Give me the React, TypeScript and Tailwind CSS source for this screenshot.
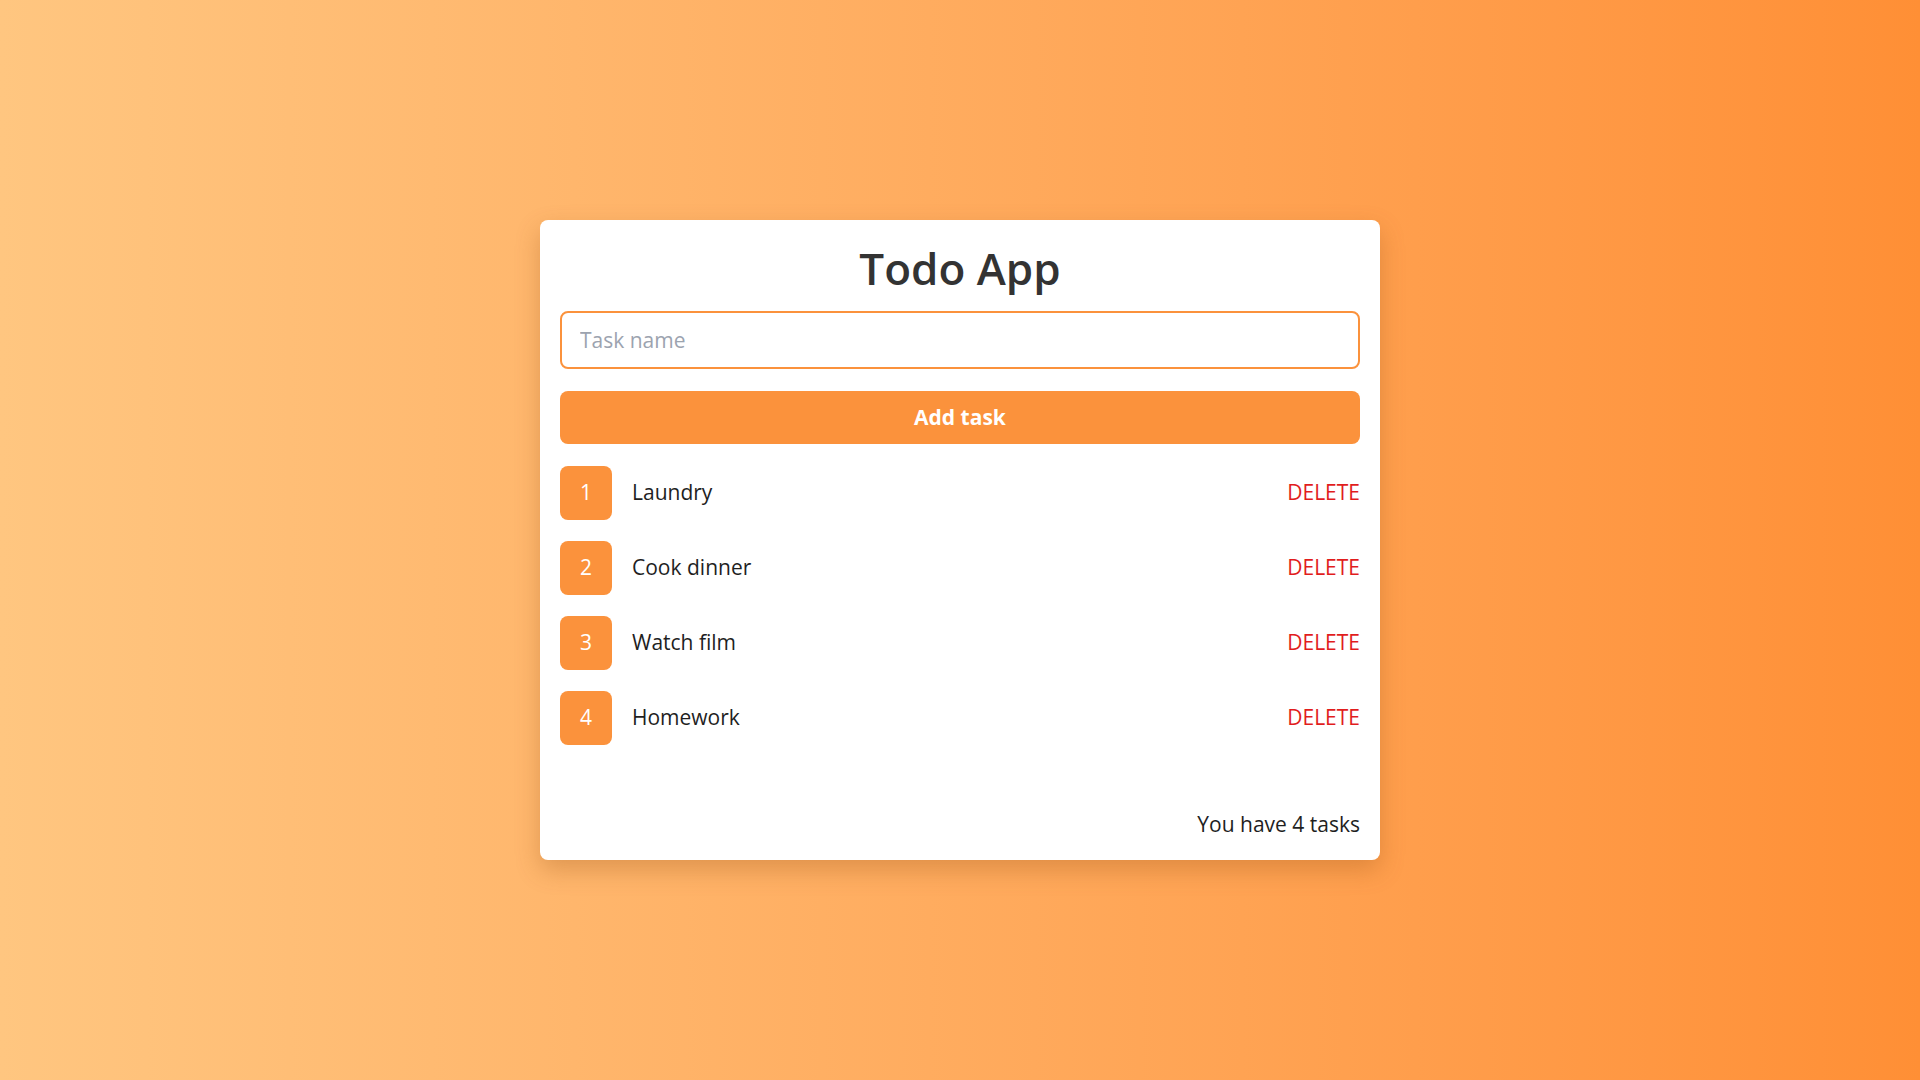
import { useState } from 'react';

type Task = {
  id: number;
  name: string;
};

const initialTasks: Task[] = [
  { id: 1, name: 'Laundry' },
  { id: 2, name: 'Cook dinner' },
  { id: 3, name: 'Watch film' },
  { id: 4, name: 'Homework' },
];

export default function App() {
  const [tasks, setTasks] = useState<Task[]>(initialTasks);
  const [name, setName] = useState('');

  const addTask = () => {
    if (!name.trim()) return;
    setTasks((prev) => [
      ...prev,
      { id: Date.now(), name: name.trim() },
    ]);
    setName('');
  };

  return (
    <div className="min-h-[calc(100vh+16px)] w-screen bg-gradient-to-r from-[#ffc680] to-[#ff8f35] font-['Open_Sans','Noto_Sans',sans-serif]">
      <div className="flex h-screen items-center justify-center">
        <div className="flex h-[640px] w-[840px] flex-col rounded-lg bg-white px-5 pt-4 pb-5 shadow-[0_10px_25px_rgba(150,80,20,0.3)]">
          <h1 className="text-center text-[44px] font-semibold leading-[64px] text-[#333333]">
            Todo App
          </h1>

          <input
            type="text"
            value={name}
            onChange={(e) => setName(e.target.value)}
            placeholder="Task name"
            className="mt-[11px] h-[58px] w-full rounded-lg border-2 border-[#fb923c] px-[18px] text-[21px] text-[#333] outline-none placeholder:text-[#9ca3af]"
          />

          <button
            type="button"
            onClick={addTask}
            className="mt-[22px] h-[53px] w-full rounded-lg bg-[#fb923c] text-[21px] font-bold text-white"
          >
            Add task
          </button>

          <ul className="mt-[22px] flex flex-col gap-[21px]">
            {tasks.map((task, i) => (
              <li key={task.id} className="flex items-center">
                <span className="flex h-[54px] w-[52px] items-center justify-center rounded-lg bg-[#fb923c] text-[21px] text-white">
                  {i + 1}
                </span>
                <span className="ml-[20px] flex-1 text-[21px] text-[#1f1f1f]">
                  {task.name}
                </span>
                <button
                  type="button"
                  onClick={() =>
                    setTasks((prev) => prev.filter((t) => t.id !== task.id))
                  }
                  className="text-[21px] text-[#e11d1d]"
                >
                  DELETE
                </button>
              </li>
            ))}
          </ul>

          <p className="mt-auto text-right text-[21px] text-[#1f1f1f]">
            You have {tasks.length} tasks
          </p>
        </div>
      </div>
    </div>
  );
}
